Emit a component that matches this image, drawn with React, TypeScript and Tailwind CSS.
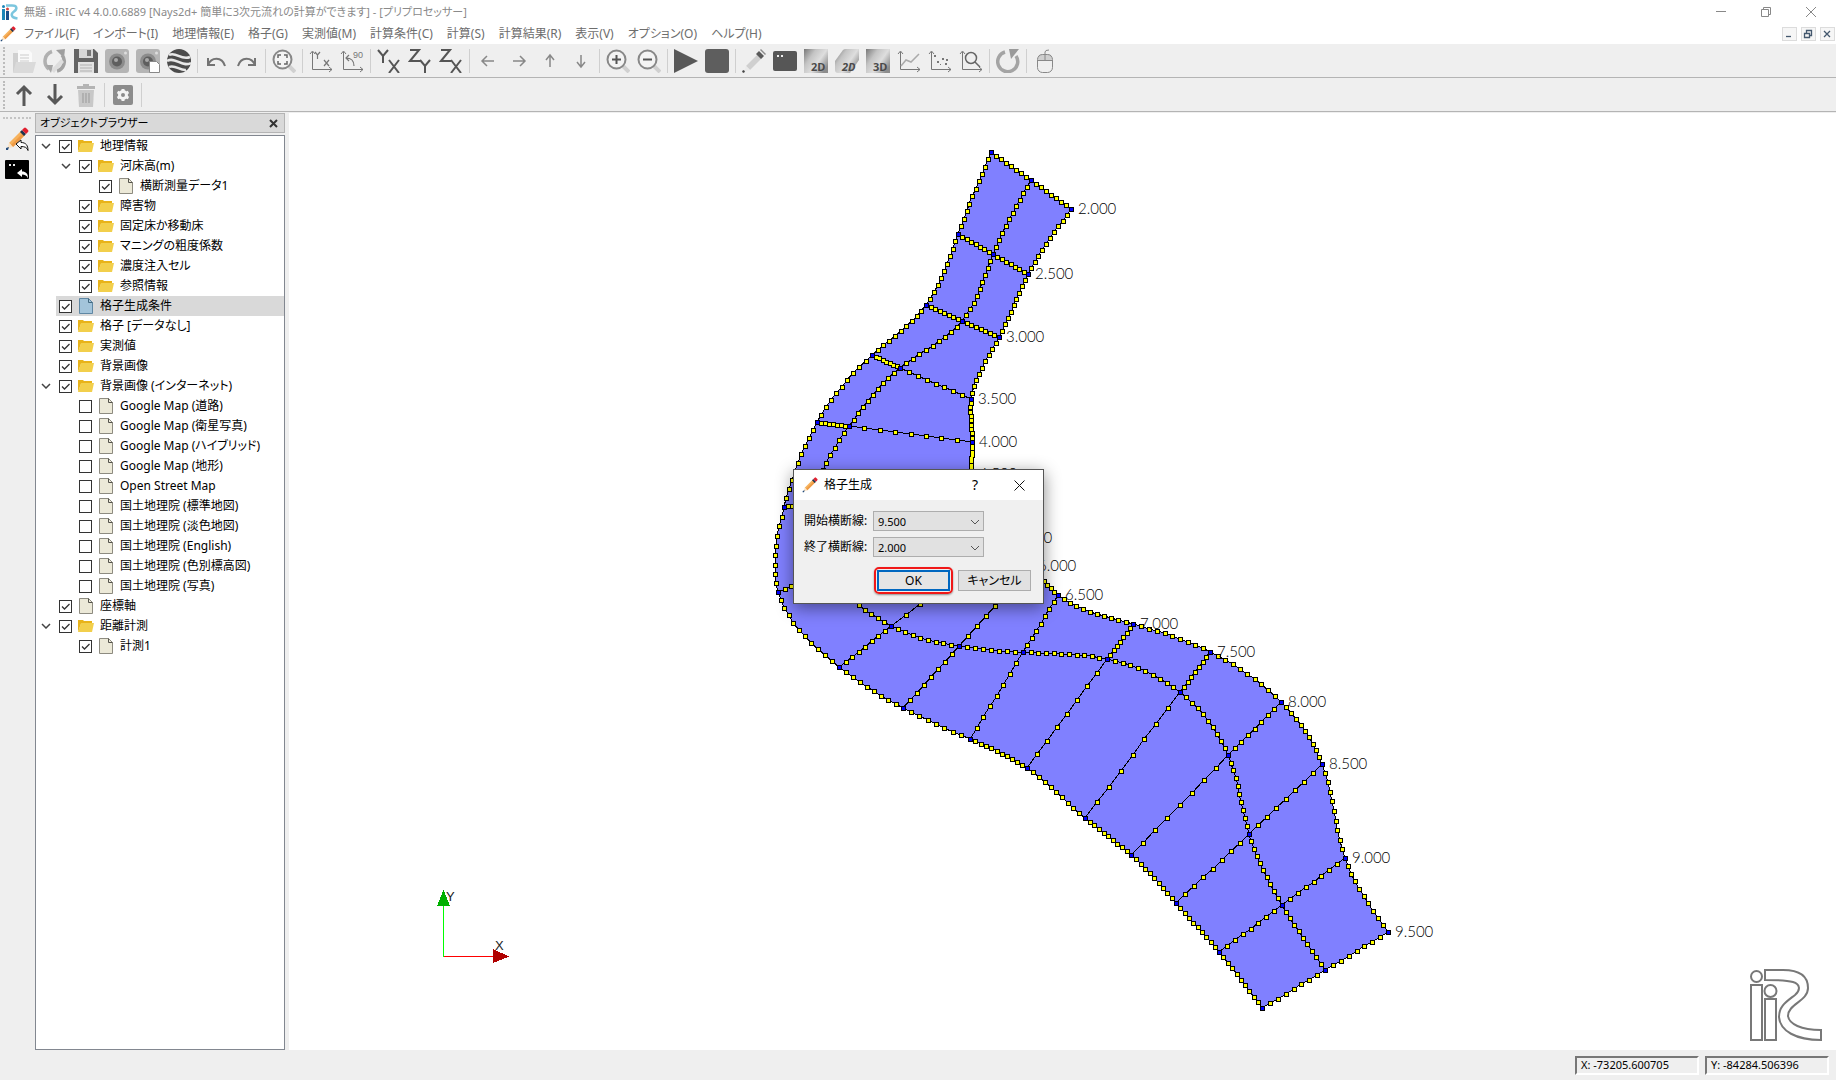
import React from "react";

type Point = [number, number];

interface TreeNode {
  label: string;
  level: number;
  icon: "folder" | "file" | "fileBlue";
  checked?: boolean;
  open?: boolean;
  selected?: boolean;
}

const MENUS = [
  "ファイル(F)",
  "インポート(I)",
  "地理情報(E)",
  "格子(G)",
  "実測値(M)",
  "計算条件(C)",
  "計算(S)",
  "計算結果(R)",
  "表示(V)",
  "オプション(O)",
  "ヘルプ(H)",
];

const TREE: TreeNode[] = [
  { label: "地理情報", level: 0, icon: "folder", checked: true, open: true },
  { label: "河床高(m)", level: 1, icon: "folder", checked: true, open: true },
  { label: "横断測量データ1", level: 2, icon: "file", checked: true },
  { label: "障害物", level: 1, icon: "folder", checked: true },
  { label: "固定床か移動床", level: 1, icon: "folder", checked: true },
  { label: "マニングの粗度係数", level: 1, icon: "folder", checked: true },
  { label: "濃度注入セル", level: 1, icon: "folder", checked: true },
  { label: "参照情報", level: 1, icon: "folder", checked: true },
  { label: "格子生成条件", level: 0, icon: "fileBlue", checked: true, selected: true },
  { label: "格子 [データなし]", level: 0, icon: "folder", checked: true },
  { label: "実測値", level: 0, icon: "folder", checked: true },
  { label: "背景画像", level: 0, icon: "folder", checked: true },
  { label: "背景画像 (インターネット)", level: 0, icon: "folder", checked: true, open: true },
  { label: "Google Map (道路)", level: 1, icon: "file" },
  { label: "Google Map (衛星写真)", level: 1, icon: "file" },
  { label: "Google Map (ハイブリッド)", level: 1, icon: "file" },
  { label: "Google Map (地形)", level: 1, icon: "file" },
  { label: "Open Street Map", level: 1, icon: "file" },
  { label: "国土地理院 (標準地図)", level: 1, icon: "file" },
  { label: "国土地理院 (淡色地図)", level: 1, icon: "file" },
  { label: "国土地理院 (English)", level: 1, icon: "file" },
  { label: "国土地理院 (色別標高図)", level: 1, icon: "file" },
  { label: "国土地理院 (写真)", level: 1, icon: "file" },
  { label: "座標軸", level: 0, icon: "file", checked: true },
  { label: "距離計測", level: 0, icon: "folder", checked: true, open: true },
  { label: "計測1", level: 1, icon: "file", checked: true },
];

const INDENT = ["pl-0", "pl-5", "pl-10"];

// River cross sections: left bank, centre line, right bank
const SECTIONS: { name: string; left: Point; center: Point; right: Point }[] = [
  { name: "2.000", left: [991, 152], center: [1031, 180], right: [1071, 209] },
  { name: "2.500", left: [958, 234], center: [993, 254], right: [1028, 274] },
  { name: "3.000", left: [926, 305], center: [962, 321], right: [999, 337] },
  { name: "3.500", left: [872, 355], center: [900, 368], right: [971, 399] },
  { name: "4.000", left: [817, 422], center: [849, 426], right: [972, 442] },
  { name: "4.500", left: [784, 507], center: [814, 502], right: [972, 474] },
  { name: "5.000", left: [778, 592], center: [830, 569], right: [984, 506] },
  { name: "5.500", left: [839, 667], center: [891, 626], right: [1007, 538] },
  { name: "6.000", left: [903, 708], center: [959, 646], right: [1031, 566] },
  { name: "6.500", left: [970, 739], center: [1023, 652], right: [1058, 595] },
  { name: "7.000", left: [1027, 768], center: [1107, 659], right: [1133, 624] },
  { name: "7.500", left: [1085, 818], center: [1180, 692], right: [1210, 652] },
  { name: "8.000", left: [1131, 855], center: [1228, 755], right: [1281, 702] },
  { name: "8.500", left: [1176, 903], center: [1249, 834], right: [1322, 764] },
  { name: "9.000", left: [1219, 952], center: [1282, 905], right: [1345, 858] },
  { name: "9.500", left: [1262, 1008], center: [1325, 970], right: [1388, 932] },
];

const DIVISIONS = [11, 10, 10, 10, 10, 9, 11, 9, 8, 11, 10, 10, 10, 10, 10];
const CROSS_DIVISIONS = 8;

// second derivatives of the natural cubic spline
function secondDerivatives(t: number[], y: number[]): number[] {
  const n = t.length;
  const m = new Array(n).fill(0);
  const u = new Array(n).fill(0);
  for (let i = 1; i < n - 1; i++) {
    const sig = (t[i] - t[i - 1]) / (t[i + 1] - t[i - 1]);
    const p = sig * m[i - 1] + 2;
    m[i] = (sig - 1) / p;
    const d = (y[i + 1] - y[i]) / (t[i + 1] - t[i]) - (y[i] - y[i - 1]) / (t[i] - t[i - 1]);
    u[i] = ((6 * d) / (t[i + 1] - t[i - 1]) - sig * u[i - 1]) / p;
  }
  m[n - 1] = 0;
  for (let k = n - 2; k >= 0; k--) m[k] = m[k] * m[k + 1] + u[k];
  return m;
}

function bankLine(points: Point[]): Point[] {
  const t = [0];
  for (let i = 1; i < points.length; i++) {
    t.push(t[i - 1] + Math.hypot(points[i][0] - points[i - 1][0], points[i][1] - points[i - 1][1]));
  }
  const axes = [0, 1].map((k) => {
    const v = points.map((p) => p[k]);
    return { v, m: secondDerivatives(t, v) };
  });
  const result: Point[] = [points[0]];
  for (let i = 0; i < points.length - 1; i++) {
    const h = t[i + 1] - t[i];
    for (let j = 1; j <= DIVISIONS[i]; j++) {
      const b = j / DIVISIONS[i];
      const a = 1 - b;
      const [x, y] = axes.map(
        ({ v, m }) =>
          a * v[i] + b * v[i + 1] + (((a * a * a - a) * m[i] + (b * b * b - b) * m[i + 1]) * h * h) / 6
      );
      result.push([Math.round(x), Math.round(y)]);
    }
  }
  return result;
}

function straightLine(from: Point, to: Point): Point[] {
  return Array.from({ length: CROSS_DIVISIONS + 1 }, (_, i) => [
    Math.round(from[0] + ((to[0] - from[0]) * i) / CROSS_DIVISIONS),
    Math.round(from[1] + ((to[1] - from[1]) * i) / CROSS_DIVISIONS),
  ]);
}

const toPath = (points: Point[]) => points.map((p) => p.join(",")).join(" ");

const leftBank = bankLine(SECTIONS.map((s) => s.left));
const centerLine = bankLine(SECTIONS.map((s) => s.center));
const rightBank = bankLine(SECTIONS.map((s) => s.right));
const crossLines = SECTIONS.flatMap((s) => [
  straightLine(s.left, s.center),
  straightLine(s.center, s.right),
]);
const gridLines = [leftBank, centerLine, rightBank, ...crossLines];
const gridPoints = gridLines.flat();
const nodes = SECTIONS.flatMap((s) => [s.left, s.center, s.right]);

// One path of squares, each reaching r pixels out from its point
const squares = (points: Point[], r: number) => {
  const size = r * 2 + 1;
  return points.map(([x, y]) => `M${x - r} ${y - r}h${size}v${size}h${-size}z`).join("");
};

const RiverCanvas = () => (
  <svg viewBox="289 113 1547 937" className="block h-full w-full" shapeRendering="crispEdges">
    <polygon points={toPath([...leftBank, ...[...rightBank].reverse()])} fill="#8080ff" />
    {gridLines.map((line, i) => (
      <polyline key={i} points={toPath(line)} fill="none" stroke="#000" />
    ))}
    <path d={squares(gridPoints, 2)} fill="#000" />
    <path d={squares(gridPoints, 1)} fill="#ffff00" />
    <path d={squares(nodes, 2)} fill="#000" />
    <path d={squares(nodes, 1)} fill="#0000ff" />
    {SECTIONS.map((s) => (
      <text
        key={s.name}
        x={s.right[0] + 7}
        y={s.right[1] + 5}
        className="fill-black font-['Lato','Liberation_Sans',sans-serif] text-[15px] font-light"
      >
        {s.name}
      </text>
    ))}

    {/* Coordinate axes */}
    <path d="M443.500 956.500V906" stroke="#00ff00" />
    <path d="M443.500 956.500H494" stroke="#ff0000" />
    <path d="M443.500 890L450 906H437Z" fill="#00b000" />
    <path d="M509 956.500L493 963V949Z" fill="#b00000" />
    <g className="fill-[#222] font-['Liberation_Sans',sans-serif] text-[13px]">
      <text x="446" y="901">Y</text>
      <text x="495" y="950">X</text>
    </g>

    {/* iRIC logo */}
    <g fill="none" stroke="#787878" strokeWidth="2" shapeRendering="geometricPrecision">
      <circle cx="1756.500" cy="976.500" r="5.500" />
      <rect x="1751" y="985" width="11" height="55" />
      <circle cx="1770.500" cy="991" r="6" />
      <rect x="1765" y="999" width="11" height="41" />
      <path d="M1765 970V980C1776 980 1786 980 1793 982C1800 984 1801 990 1795 995C1786 1002 1779 1006 1779 1017C1780 1031 1796 1040 1821 1040V1030C1801 1030 1789 1024 1788 1016C1788 1004 1808 1001 1808 988C1808 974 1797 970 1783 970Z" />
    </g>
  </svg>
);

const PencilIcon = ({ size = 24 }: { size?: number }) => (
  <svg width={size} height={size} viewBox="0 0 24 24">
    <path d="M4 16L16 4l4 4L8 20z" fill="#f7b25c" />
    <path d="M6 18L18 6l2 2L8 20z" fill="#ee9a45" />
    <path d="M4 16l4 4-6 2z" fill="#fbe3c4" />
    <path d="M1 21l3-1-1 3H1z" fill="#234b7c" />
    <path d="M15 5l2-2 4 4-2 2z" fill="#1d3450" />
    <path d="M17 3l2-2q1-1 2 0l2 2q1 1 0 2l-2 2z" fill="#e01f2f" />
  </svg>
);

const Axes = ({ children }: { children?: React.ReactNode }) => (
  <>
    <path d="M3.500 3v17.500H23M1 5l2.500-3L6 5M20 18l3 2.500-3 2.500" fill="none" stroke="#777" strokeWidth="1" />
    {children}
  </>
);

const Lens = ({ children }: { children?: React.ReactNode }) => (
  <>
    <path d="M17 17l6 6" stroke="#d0d0d0" strokeWidth="4" />
    <circle cx="10.500" cy="10.500" r="9" fill="#f4f4f4" stroke="#888" strokeWidth="2" />
    {children}
  </>
);

const Tile = ({ text, slanted }: { text: string; slanted?: boolean }) => (
  <>
    <defs>
      <linearGradient id="tile" x1="0" y1="0" x2="1" y2=".7">
        <stop offset="0" stopColor="#777" />
        <stop offset=".35" stopColor="#c4c4c4" />
        <stop offset=".65" stopColor="#dedede" />
        <stop offset="1" stopColor="#8c8c8c" />
      </linearGradient>
    </defs>
    <path d={slanted ? "M0 12L8 1Q9 0 11 0H24V11L15 24H3Q0 24 0 21z" : "M0 0H24V24H0z"} fill="url(#tile)" />
    <text
      x="7"
      y="22"
      className={`fill-[#4a4a4a] font-['Open_Sans','Noto_Sans',sans-serif] text-[11px] font-bold ${slanted ? "italic" : ""}`}
    >
      {text}
    </text>
  </>
);

const Camera = () => (
  <>
    <rect y="0" width="24" height="24" rx="3" fill="#b5b5b5" />
    <circle cx="12" cy="12.500" r="8" fill="#8c8c8c" />
    <circle cx="12" cy="12.500" r="5" fill="#5e5e5e" />
    <circle cx="11" cy="11" r="2" fill="#a8a8a8" />
    <circle cx="20.500" cy="4" r="1.500" fill="#ddd" />
  </>
);

const PlaneLetters = ({ up, down }: { up: React.ReactNode; down: React.ReactNode }) => (
  <g fill="none" stroke="#555" strokeWidth="2">
    {up}
    {down}
  </g>
);

const letterX = <path d="M12 11l10 13M22 11L12 24" />;
const letterZ = <path d="M2 1h9L2 12h10" />;
const letterYUp = <path d="M1 1l5 6 5-6M6 7v7" />;
const letterYDown = <path d="M12 11l5 6 5-6M17 17v7" />;

const ICONS: Record<string, React.ReactNode> = {
  open: (
    <>
      <path d="M1 4h7l2 3v16H1z" fill="#d0d0d0" />
      <path d="M6 1h11l3 3v10H6z" fill="#fafafa" />
      <path d="M8 6h9M8 9h9M8 12h9" stroke="#ccc" />
      <path d="M4 13h20l-3 11H1z" fill="#dadada" />
    </>
  ),
  refresh: (
    <>
      <path d="M9 2.500A10 10 0 0 0 6 20" fill="none" stroke="#b0b0b0" strokeWidth="3.500" />
      <path d="M13 1l9-1-1 9z" fill="#9e9e9e" />
      <path d="M19 6A10 10 0 0 1 14 22" fill="none" stroke="#a2a2a2" strokeWidth="3.500" />
      <path d="M8 21L18 10l3 3L11 24z" fill="#ddd" />
      <path d="M3 16l7 0-2 8z" fill="#a6a6a6" />
    </>
  ),
  save: (
    <>
      <path d="M0 0h20l4 4v20H0z" fill="#646464" />
      <path d="M5 0h14v9H5z" fill="#d6d6d6" />
      <path d="M13 1h4v6h-4z" fill="#777" />
      <path d="M4 13h16v11H4z" fill="#e2e2e2" />
      <path d="M6 16h12M6 19h12M6 22h12" stroke="#b0b0b0" />
    </>
  ),
  camera: <Camera />,
  cameraCopy: (
    <>
      <Camera />
      <path d="M13.500 12.500h7l3 3v8h-10z" fill="#fff" stroke="#888" />
    </>
  ),
  earth: (
    <>
      <circle cx="12" cy="12" r="12" fill="#4b4b4b" />
      <path d="M2 6c7-4 12 6 21 2M0 12c8-5 15 7 24 2M2 18c6-3 11 4 17 3" fill="none" stroke="#e8e8e8" strokeWidth="2.500" />
    </>
  ),
  undo: <path d="M4 9v7h7M4 16C7 8 18 7 21 17" fill="none" stroke="#747474" strokeWidth="2" />,
  redo: <path d="M20 9v7h-7M20 16C17 8 6 7 3 17" fill="none" stroke="#747474" strokeWidth="2" />,
  zoomFit: (
    <Lens>
      <path d="M6 9V6h3M12 6h3v3M15 12v3h-3M9 15H6v-3" fill="none" stroke="#666" strokeWidth="1.500" />
    </Lens>
  ),
  axesXY: (
    <Axes>
      <path d="M6 3l2.500 3L11 3M8.500 6v4M15 11l5 6M20 11l-5 6" fill="none" stroke="#777" strokeWidth="1.200" />
    </Axes>
  ),
  rotate90: (
    <Axes>
      <path d="M14 17C14 12 11 9 6 9M9 6L6 9l3 3" fill="none" stroke="#777" strokeWidth="1.200" />
      <text x="13" y="9" className="fill-[#777] font-['Liberation_Sans',sans-serif] text-[9px]">90</text>
    </Axes>
  ),
  planeYX: <PlaneLetters up={letterYUp} down={letterX} />,
  planeZY: <PlaneLetters up={letterZ} down={letterYDown} />,
  planeZX: <PlaneLetters up={letterZ} down={letterX} />,
  left: <path d="M18 12H7M11 7l-5 5 5 5" fill="none" stroke="#888" strokeWidth="1.500" />,
  right: <path d="M6 12h11M13 7l5 5-5 5" fill="none" stroke="#888" strokeWidth="1.500" />,
  up: <path d="M12 18V7M8 11l4-5 4 5" fill="none" stroke="#888" strokeWidth="1.500" />,
  down: <path d="M12 6v11M8 13l4 5 4-5" fill="none" stroke="#888" strokeWidth="1.500" />,
  zoomIn: (
    <Lens>
      <path d="M6 10.500h9M10.500 6v9" stroke="#555" strokeWidth="2" />
    </Lens>
  ),
  zoomOut: (
    <Lens>
      <path d="M6 10.500h9" stroke="#555" strokeWidth="2" />
    </Lens>
  ),
  play: <path d="M0 0L24 12 0 24z" fill="#585858" />,
  stop: <rect width="24" height="24" rx="3" fill="#5e5e5e" />,
  pencil: (
    <>
      <path d="M4 17L17 4l4 4L8 21z" fill="#cfcfcf" />
      <path d="M14 5l3-3 5 5-3 3z" fill="#5a5a5a" />
      <path d="M18 1l1-1 5 5-1 1z" fill="#8c8c8c" />
      <path d="M4 17l4 4-6 2z" fill="#eaeaea" />
      <path d="M0 22l2-1 1 2-2 1z" fill="#444" />
    </>
  ),
  console: (
    <>
      <rect y="2" width="24" height="20" rx="2" fill="#565656" />
      <path d="M4 6h2v2H4zM8 6h2v2H8z" fill="#eee" />
    </>
  ),
  tile2D: <Tile text="2D" />,
  tile2DSlant: <Tile text="2D" slanted />,
  tile3D: <Tile text="3D" />,
  lineChart: (
    <Axes>
      <path d="M4 17l5-6 5 2 8-8" fill="none" stroke="#aaa" strokeWidth="1.500" />
    </Axes>
  ),
  scatter: (
    <Axes>
      <path d="M6 6h2v2H6zM9 12h2v2H9zM14 9h2v2h-2zM17 14h2v2h-2zM12 15h1v1h-1zM18 10h2v2h-2z" fill="#777" />
    </Axes>
  ),
  zoomChart: (
    <Axes>
      <circle cx="12" cy="9" r="5.500" fill="none" stroke="#666" strokeWidth="1.500" />
      <path d="M16 13l5 5" stroke="#666" strokeWidth="1.500" />
    </Axes>
  ),
  reload: (
    <>
      <path d="M9 3A10 10 0 1 0 20 7" fill="none" stroke="#a4a4a4" strokeWidth="3.500" />
      <path d="M13 0h10l-8 10z" fill="#9a9a9a" />
    </>
  ),
  mouse: (
    <>
      <path d="M5 11h14V9q0-4-4-4H9q-4 0-4 4z" fill="#cfcfcf" />
      <rect x="4.500" y="5.500" width="15" height="18" rx="5" fill="none" stroke="#888" />
      <path d="M4.500 11.500h15M12 5.500v6M12 5V3q0-2 4-2" fill="none" stroke="#888" />
    </>
  ),
  bigUp: <path d="M12 23V4M5 11l7-7 7 7" fill="none" stroke="#585858" strokeWidth="3" />,
  bigDown: <path d="M12 1v19M5 13l7 7 7-7" fill="none" stroke="#585858" strokeWidth="3" />,
  trash: (
    <>
      <path d="M4 7h16l-1 17H5z" fill="#c8c8c8" />
      <path d="M3 3h18v3H3zM9 1h6v2H9z" fill="#b4b4b4" />
      <path d="M9 10v10M12 10v10M15 10v10" stroke="#999" />
    </>
  ),
  gear: (
    <>
      <rect x="2" y="2" width="20" height="20" rx="2" fill="#8c8c8c" />
      <circle cx="12" cy="12" r="3.500" fill="none" stroke="#f4f4f4" strokeWidth="3" />
      <path d="M12 6v2M12 16v2M6.500 9l2 1M15.500 14l2 1M6.500 15l2-1M15.500 10l2-1" stroke="#f4f4f4" strokeWidth="3" />
    </>
  ),
};

const MAIN_TOOLS = [
  "open", "refresh", "save", "camera", "cameraCopy", "earth", "|",
  "undo", "redo", "|",
  "zoomFit", "|",
  "axesXY", "rotate90", "|",
  "planeYX", "planeZY", "planeZX", "|",
  "left", "right", "up", "down", "|",
  "zoomIn", "zoomOut", "|",
  "play", "stop", "|",
  "pencil", "console", "tile2D", "tile2DSlant", "tile3D", "lineChart", "scatter", "zoomChart", "|",
  "reload", "|",
  "mouse",
];

const SUB_TOOLS = ["bigUp", "bigDown", "trash", "|", "gear", "|"];

const Toolbar = ({ tools }: { tools: string[] }) => (
  <div role="toolbar" className="flex h-[34px] items-center border-b border-[#b4b4b4] bg-[#efefef]">
    <div className="mx-[3px] h-7 w-0 border-l-2 border-dotted border-[#bcbcbc]" />
    {tools.map((tool, i) =>
      tool === "|" ? (
        <div key={i} className="flex w-[6px] justify-center">
          <div className="h-6 w-px bg-[#cfcfcf]" />
        </div>
      ) : (
        <button key={i} type="button" aria-label={tool} className="flex w-[31px] justify-center">
          <svg width="24" height="24" viewBox="0 0 24 24">
            {ICONS[tool]}
          </svg>
        </button>
      )
    )}
  </div>
);

const TreeIcon = ({ icon }: { icon: TreeNode["icon"] }) => {
  if (icon === "folder") {
    return (
      <svg width="16" height="16" viewBox="0 0 16 16">
        <path d="M0 2h5l1 1h8v3H3L0 14z" fill="#e8b31a" />
        <path d="M3 5h13l-2 9H0z" fill="#f2cf4c" />
      </svg>
    );
  }
  const blue = icon === "fileBlue";
  return (
    <svg width="16" height="16" viewBox="0 0 16 16">
      <path d="M1.500 .5h9l4 4v11h-13z" fill={blue ? "#a3c4da" : "#ece9d8"} stroke={blue ? "#5f87a3" : "#8d8b80"} />
      <path d="M10.500 .5v4h4" fill="none" stroke={blue ? "#43687f" : "#55534c"} />
    </svg>
  );
};

const TreeRow = ({ node }: { node: TreeNode }) => (
  <li className={INDENT[node.level]}>
    <div className="flex h-5 items-center">
      <span className="flex w-5 shrink-0 justify-center">
        {node.open && (
          <svg width="10" height="6" viewBox="0 0 10 6">
            <path d="M1 1l4 4 4-4" fill="none" stroke="#444" strokeWidth="1.500" />
          </svg>
        )}
      </span>
      <label className={`flex h-5 flex-1 items-center pl-[3px] ${node.selected ? "bg-[#d9d9d9]" : ""}`}>
        <span className="relative mr-[6px] h-[13px] w-[13px]">
          <input
            type="checkbox"
            defaultChecked={node.checked}
            className="peer block h-[13px] w-[13px] appearance-none border border-[#333] bg-white"
          />
          <svg
            viewBox="0 0 13 13"
            className="pointer-events-none absolute inset-0 hidden h-[13px] w-[13px] peer-checked:block"
          >
            <path d="M3 6.500l2.500 2.500L10.500 4" fill="none" stroke="#333" strokeWidth="1.300" />
          </svg>
        </span>
        <TreeIcon icon={node.icon} />
        <span className="ml-[6px] whitespace-nowrap">{node.label}</span>
      </label>
    </div>
  </li>
);

const ObjectBrowser = () => (
  <aside className="flex w-[250px] flex-col">
    <div className="mb-[2px] flex h-5 items-center justify-between border border-[#b4b4b4] bg-[#d9d9d9] pl-1 pr-[6px]">
      <h2 className="text-[11px]">オブジェクトブラウザー</h2>
      <button type="button" aria-label="閉じる">
        <svg width="9" height="9" viewBox="0 0 9 9">
          <path d="M1 1l7 7M8 1L1 8" stroke="#333" strokeWidth="2" />
        </svg>
      </button>
    </div>
    <ul className="flex-1 border border-[#828790] bg-white">
      {TREE.map((node) => (
        <TreeRow key={node.label} node={node} />
      ))}
    </ul>
  </aside>
);

const SectionSelect = ({ id, label, value }: { id: string; label: string; value: string }) => (
  <div className="flex h-5 items-center">
    <label htmlFor={id} className="w-[69px]">
      {label}
    </label>
    <div className="relative">
      <select
        id={id}
        defaultValue={value}
        className="block h-5 w-[111px] appearance-none border border-[#adadad] bg-[#e1e1e1] pl-1 text-[11px] leading-none"
      >
        {SECTIONS.map((s) => (
          <option key={s.name}>{s.name}</option>
        ))}
      </select>
      <svg width="10" height="6" viewBox="0 0 10 6" className="pointer-events-none absolute right-1 top-2">
        <path d="M1 1l4 4 4-4" fill="none" stroke="#555" />
      </svg>
    </div>
  </div>
);

const GridDialog = () => (
  <div
    role="dialog"
    aria-label="格子生成"
    className="absolute left-[793px] top-[469px] w-[251px] border border-[#555] bg-[#f0f0f0] text-black shadow-[0_4px_16px_rgba(0,0,0,0.45)]"
  >
    <div className="flex h-[30px] items-center bg-white pl-2 pr-[18px]">
      <PencilIcon size={16} />
      <span className="ml-[6px] flex-1">格子生成</span>
      <button type="button" className="mr-9 text-[14px]">?</button>
      <button type="button" aria-label="閉じる">
        <svg width="11" height="11" viewBox="0 0 11 11">
          <path d="M.5 .5l10 10M10.500 .5l-10 10" stroke="#111" />
        </svg>
      </button>
    </div>
    <form className="flex flex-col gap-[6px] px-[10px] pb-[9px] pt-[11px]">
      <SectionSelect id="start" label="開始横断線:" value="9.500" />
      <SectionSelect id="end" label="終了横断線:" value="2.000" />
      <div className="flex items-center justify-end gap-[5px] pr-[2px] pt-1">
        <div className="rounded-[5px] border-2 border-[#f01818] p-px shadow-[0_1px_2px_rgba(0,0,0,0.4)]">
          <button
            type="button"
            className="flex h-[21px] w-[73px] items-center justify-center border-2 border-[#0067c0] bg-[#e5e5e5]"
          >
            OK
          </button>
        </div>
        <button
          type="button"
          className="flex h-[21px] w-[73px] items-center justify-center border border-[#adadad] bg-[#e1e1e1]"
        >
          キャンセル
        </button>
      </div>
    </form>
  </div>
);

const StatusField = ({ text }: { text: string }) => (
  <div className="flex h-[19px] w-[124px] items-center border-2 border-b-white border-l-[#777] border-r-white border-t-[#777] pl-1 text-[11px]">
    {text}
  </div>
);

export default function App() {
  return (
    <div className="relative flex h-screen flex-col overflow-hidden bg-[#efefef] font-['Noto_Sans','Noto_Sans_CJK_JP',sans-serif] text-[12px] leading-4 text-black [font-feature-settings:'palt']">
      {/* Title bar */}
      <header className="flex h-6 items-center bg-white pl-[2px] text-[#8a8a8a]">
        <svg width="16" height="16" viewBox="0 0 16 16">
          <path d="M0 5h3v11H0z" fill="#1c86b8" />
          <path d="M4 7h3v9H4z" fill="#1b4f8a" />
          <circle cx="1.500" cy="2.500" r="1.500" fill="#1c86b8" />
          <circle cx="5.500" cy="5" r="1.500" fill="#d5433b" />
          <path d="M4 1.500h6c6 0 5 4 2 6s-4 6 3.500 7" fill="none" stroke="#7cc6de" strokeWidth="2.500" />
        </svg>
        <h1 className="ml-[6px] flex-1 text-[11px]">
          無題 - iRIC v4 4.0.0.6889 [Nays2d+ 簡単に3次元流れの計算ができます] - [プリプロセッサー]
        </h1>
        <div className="flex items-center gap-[35px] pr-5">
          <button type="button" aria-label="最小化">
            <svg width="10" height="10" viewBox="0 0 10 10"><path d="M0 4.500h10" stroke="#888" /></svg>
          </button>
          <button type="button" aria-label="元に戻す">
            <svg width="10" height="10" viewBox="0 0 10 10">
              <path d="M.5 2.500h7v7h-7zM2.500 2.500v-2h7v7h-2" fill="none" stroke="#888" />
            </svg>
          </button>
          <button type="button" aria-label="閉じる">
            <svg width="10" height="10" viewBox="0 0 10 10"><path d="M0 0l10 10M10 0L0 10" stroke="#888" /></svg>
          </button>
        </div>
      </header>

      {/* Menu bar */}
      <nav className="flex h-5 items-center bg-white text-[#6d6d6d]">
        <PencilIcon size={16} />
        <div className="ml-2 flex flex-1 gap-[14px]">
          {MENUS.map((menu) => (
            <button key={menu} type="button" className="whitespace-nowrap">
              {menu}
            </button>
          ))}
        </div>
        <div className="flex gap-1 pr-px">
          {["M4 9.500h5", "M3.500 6.500h5v4h-5zM5.500 6v-2.500h5v5h-2", "M4 4l6 6M10 4l-6 6"].map((d) => (
            <button key={d} type="button" aria-label="MDI">
              <svg width="15" height="14" viewBox="0 0 15 14">
                <rect x=".5" y=".5" width="14" height="13" fill="#f6f6f6" stroke="#dcdcdc" />
                <path d={d} fill="none" stroke="#44586e" strokeWidth="1.300" />
              </svg>
            </button>
          ))}
        </div>
      </nav>

      <Toolbar tools={MAIN_TOOLS} />
      <Toolbar tools={SUB_TOOLS} />

      {/* Workspace */}
      <div className="flex min-h-0 flex-1 pt-px">
        <div className="flex w-[35px] flex-col items-center gap-2 pr-px pt-1">
          <div className="w-7 border-t-2 border-dotted border-[#c4c4c4]" />
          <button type="button" aria-label="プリプロセッサー" className="relative">
            <PencilIcon />
            <svg width="14" height="12" viewBox="0 0 14 12" className="absolute bottom-0 right-0">
              <path d="M1 5l5-4v2.500c5 0 7 3 7 8-1-3-3-4-7-4V10z" fill="#fff" stroke="#111" />
            </svg>
          </button>
          <button type="button" aria-label="ソルバーコンソール">
            <svg width="24" height="22" viewBox="0 0 24 22">
              <rect y="1" width="24" height="19" rx="1" fill="#000" />
              <path d="M4 5h2v2H4zM8 5h2v2H8z" fill="#eee" />
              <path d="M12 14l5-4v2.500c4 0 6 2 6 7-1-3-3-4-6-4V18z" fill="#fff" />
            </svg>
          </button>
        </div>
        <ObjectBrowser />
        <main className="ml-1 min-w-0 flex-1 bg-white">
          <RiverCanvas />
        </main>
      </div>

      {/* Status bar */}
      <footer className="flex h-[30px] items-center justify-end gap-[6px] pr-[7px]">
        <StatusField text="X: -73205.600705" />
        <StatusField text="Y: -84284.506396" />
      </footer>

      <GridDialog />
    </div>
  );
}
